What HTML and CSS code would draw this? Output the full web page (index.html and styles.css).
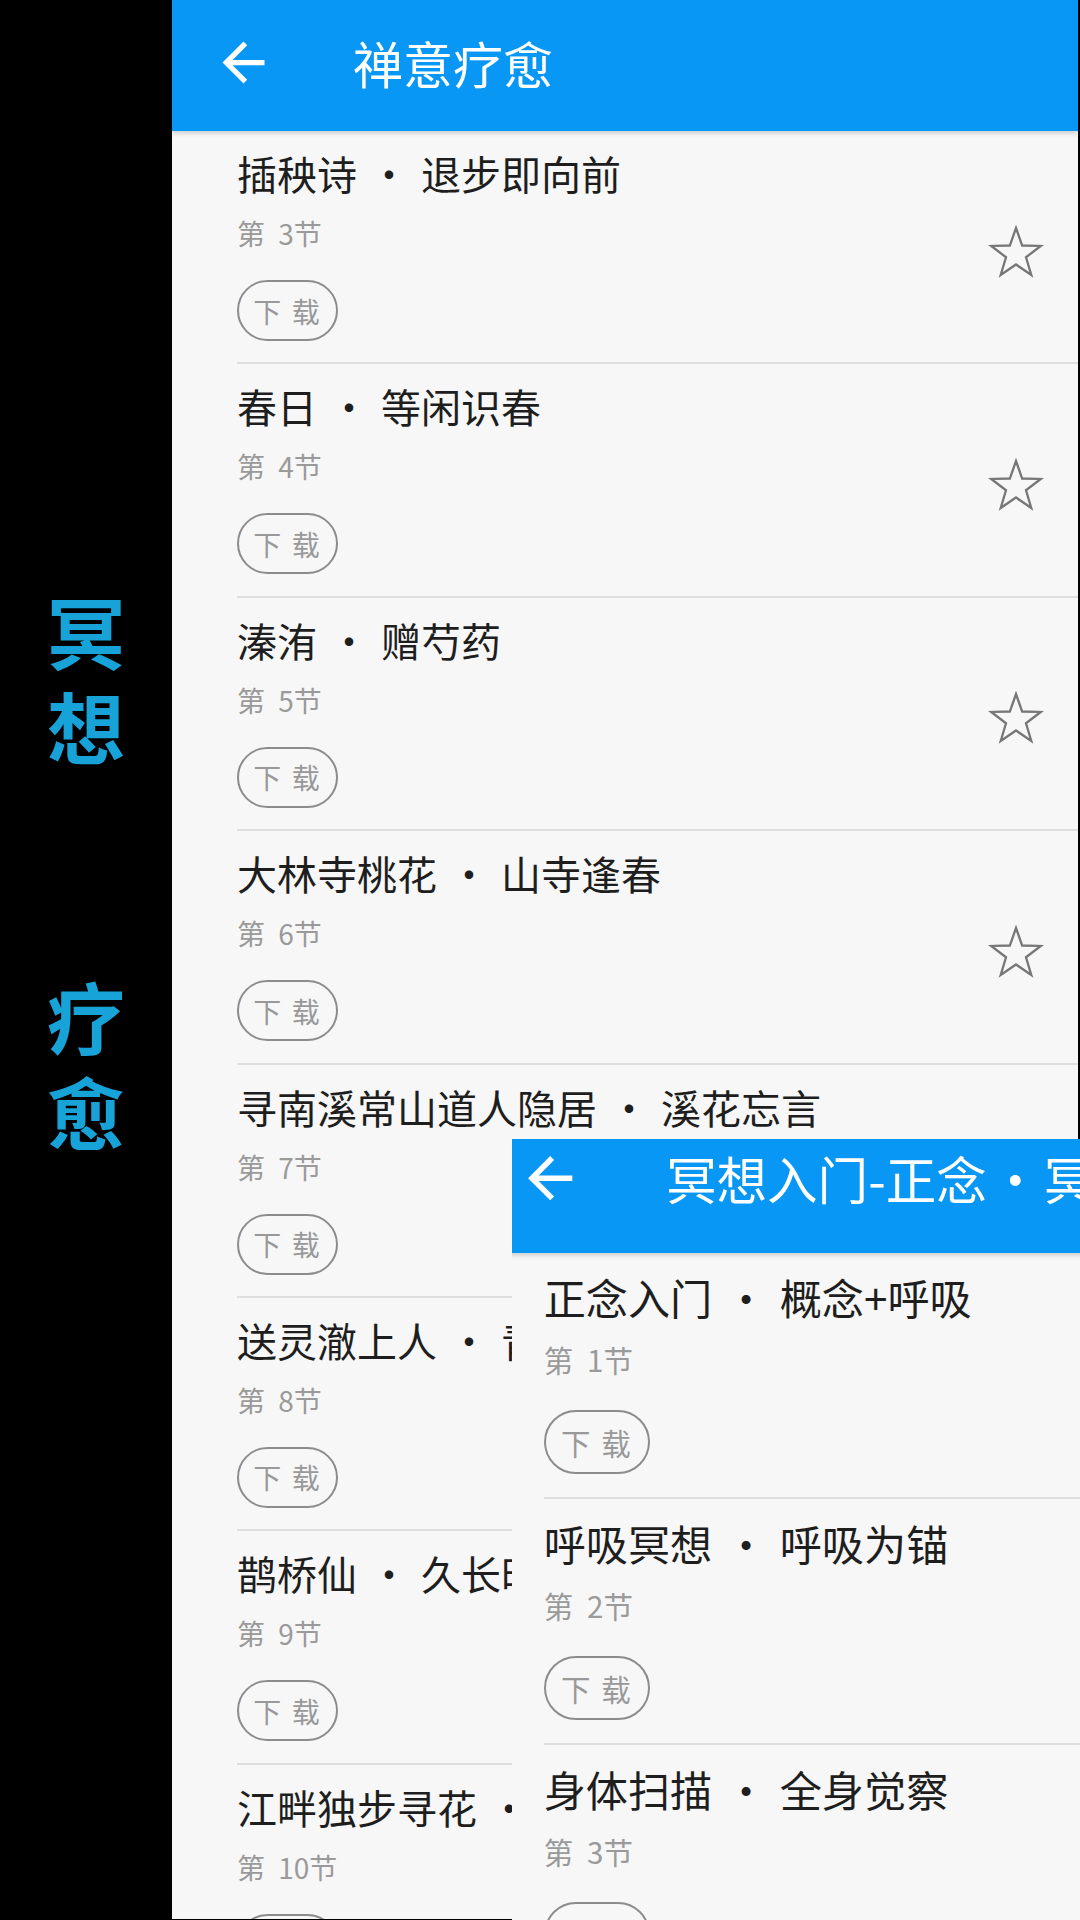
FILE: index.html
```html
<!DOCTYPE html>
<html lang="zh-CN">
<head>
  <meta charset="UTF-8">
  <meta name="viewport" content="width=device-width, initial-scale=1.0">
  <title>禅意疗愈</title>

  <link rel="stylesheet" href="styles.css">
</head>
<body>
  <div class="side">
    <div class="side-word">冥<br>想</div>
    <div class="side-word">疗<br>愈</div>
  </div>

  <div class="phone">
    <div class="app-bar">
      <svg viewBox="0 0 24 24"><path d="M20 11H7.83l5.59-5.59L12 4l-8 8 8 8 1.41-1.41L7.83 13H20v-2z" fill="#fff"/></svg>
      <h1>禅意疗愈</h1>
    </div>
    <ul class="lessons" id="mainList"></ul>
  </div>

  <div class="popup">
    <div class="phone">
      <div class="app-bar">
        <svg viewBox="0 0 24 24"><path d="M20 11H7.83l5.59-5.59L12 4l-8 8 8 8 1.41-1.41L7.83 13H20v-2z" fill="#fff"/></svg>
        <h1>冥想入门-正念<span class="dot">·</span>冥想入门</h1>
      </div>
      <ul class="lessons" id="popupList"></ul>
    </div>
  </div>

  <script>
    // Lessons shown in the two screens
    const mainLessons = [
      { name: '插秧诗', topic: '退步即向前', no: 3 },
      { name: '春日', topic: '等闲识春', no: 4 },
      { name: '溱洧', topic: '赠芍药', no: 5 },
      { name: '大林寺桃花', topic: '山寺逢春', no: 6 },
      { name: '寻南溪常山道人隐居', topic: '溪花忘言', no: 7 },
      { name: '送灵澈上人', topic: '青山独归', no: 8 },
      { name: '鹊桥仙', topic: '久长时', no: 9 },
      { name: '江畔独步寻花', topic: '花开满蹊', no: 10 }
    ];

    const popupLessons = [
      { name: '正念入门', topic: '概念+呼吸', no: 1 },
      { name: '呼吸冥想', topic: '呼吸为锚', no: 2 },
      { name: '身体扫描', topic: '全身觉察', no: 3 }
    ];

    const starSvg = '<svg class="star" viewBox="0 0 60 56"><polygon points="30,3 36.17,20.51 54.73,20.97 39.99,32.24 45.28,50.03 30,39.5 14.72,50.03 20.01,32.24 5.27,20.97 23.83,20.51" fill="none" stroke="#777" stroke-width="2.3"/></svg>';

    // Render a lesson list
    function renderLessons(listId, lessons) {
      const list = document.getElementById(listId);
      lessons.forEach((lesson) => {
        const li = document.createElement('li');
        li.className = 'lesson';
        li.innerHTML =
          '<div class="lesson-info">' +
            '<h3 class="lesson-title">' + lesson.name + '<span class="dot">·</span>' + lesson.topic + '</h3>' +
            '<p class="lesson-no">第 ' + lesson.no + '节</p>' +
            '<button class="btn-download">下 载</button>' +
          '</div>' + starSvg;
        list.appendChild(li);
      });
    }

    renderLessons('mainList', mainLessons);
    renderLessons('popupList', popupLessons);
  </script>
</body>
</html>
```

FILE: styles.css
```css
* {
  box-sizing: border-box;
}

body {
  margin: 0;
  width: 1080px;
  height: 1920px;
  display: flex;
  position: relative;
  overflow: hidden;
  background-color: #000;
  font-family: "Noto Sans CJK SC", "Noto Sans", sans-serif;
}

.side {
  width: 172px;
  flex-shrink: 0;
  padding-top: 583px;
  color: #17a2d8;
  font-size: 78px;
  font-weight: 700;
  line-height: 95px;
  text-align: center;
}

.side-word + .side-word {
  margin-top: 195px;
}

.phone {
  width: 906px;
  height: 1919px;
  flex-shrink: 0;
  overflow: hidden;
  background-color: #f7f7f7;
}

.app-bar {
  position: relative;
  z-index: 1;
  height: 131px;
  display: flex;
  align-items: center;
  padding: 0 0 7px 40px;
  color: #fff;
  background-color: #0897f4;
  box-shadow: 0 2px 5px rgba(0, 0, 0, 0.18);
}

.app-bar svg {
  width: 63px;
  height: 63px;
  flex-shrink: 0;
}

.app-bar h1 {
  margin: 0 0 0 78px;
  font-size: 50px;
  font-weight: 400;
  white-space: nowrap;
}

.app-bar .dot {
  width: 54px;
}

.lessons {
  list-style: none;
  margin: 0;
  padding: 0;
}

.lesson {
  height: 233.4px;
  margin-left: 65px;
  padding-right: 32px;
  display: flex;
  align-items: center;
  justify-content: space-between;
  border-bottom: 2px solid #dedede;
}

.lesson-info {
  align-self: flex-start;
  padding-top: 18px;
}

.lesson-title {
  margin: 0;
  font-size: 40px;
  line-height: 48px;
  font-weight: 400;
  color: #1e1e1e;
  white-space: nowrap;
}

.dot {
  display: inline-block;
  width: 64px;
  text-align: center;
}

.lesson-no {
  margin: 20px 0 0;
  font-size: 28px;
  line-height: 32px;
  color: #9a9a9a;
  word-spacing: 7px;
}

.btn-download {
  display: block;
  margin-top: 31px;
  width: 101px;
  height: 61px;
  padding: 0;
  border: 2px solid #8c8c8c;
  border-radius: 31px;
  background: transparent;
  color: #999;
  font: 28px "Noto Sans CJK SC", sans-serif;
  letter-spacing: 2px;
}

.star {
  width: 60px;
  height: 56px;
  flex-shrink: 0;
  margin-top: 12px;
}

/* second screen laid over the first one */
.popup {
  position: absolute;
  left: 512px;
  top: 1139px;
  right: 0;
  bottom: 0;
  overflow: hidden;
  background-color: #f7f7f7;
}

.popup .phone {
  zoom: 1.054;
  height: auto;
  margin: -23px 0 0 -35px;
}

.popup .app-bar {
  padding-bottom: 11px;
}

.popup .app-bar h1 {
  font-size: 48px;
}
```
